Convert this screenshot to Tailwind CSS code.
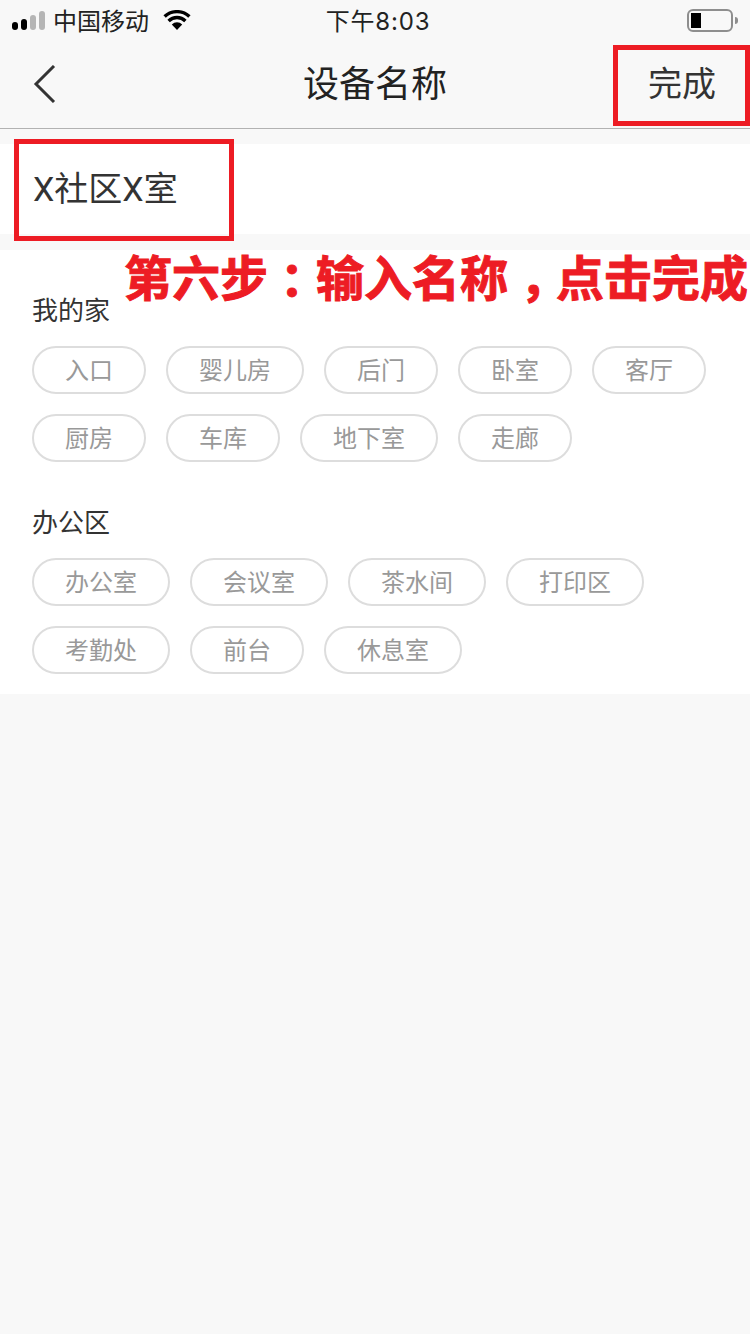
<!DOCTYPE html>
<html lang="zh-CN">
<head>
    <meta charset="UTF-8">
    <meta name="viewport" content="width=device-width, initial-scale=1.0">
    <title>设备名称</title>
    <script src="https://cdn.jsdelivr.net/npm/@tailwindcss/browser@4"></script>
</head>
<body class="bg-[#f8f8f8] font-['Noto_Sans_CJK_SC','Noto_Sans',sans-serif]">
    <div class="relative w-[750px] h-[1334px] overflow-hidden">
        <!-- Status bar -->
        <div class="grid grid-cols-[1fr_auto_1fr] items-center h-[40px] pl-[12px] pr-[12px] text-[24px] text-[#222]">
            <div class="flex items-center">
                <div class="flex items-end gap-[3px] h-[20px] w-[33px]">
                    <span class="w-[6px] h-[8px] rounded-[3px] bg-black"></span>
                    <span class="w-[6px] h-[11px] rounded-[3px] bg-black"></span>
                    <span class="w-[6px] h-[15px] rounded-[3px] bg-[#b5b5b5]"></span>
                    <span class="w-[6px] h-[19px] rounded-[3px] bg-[#b5b5b5]"></span>
                </div>
                <span class="ml-[8px] leading-none whitespace-nowrap">中国移动</span>
                <svg class="ml-[14px] shrink-0" width="28" height="20" viewBox="0 0 28 20">
                    <path d="M14 20 L8.8 14.4 A7.6 7.6 0 0 1 19.2 14.4 Z" fill="#000"/>
                    <path d="M5.6 11 A12 12 0 0 1 22.4 11" fill="none" stroke="#000" stroke-width="3.4"/>
                    <path d="M1.6 6.6 A18 18 0 0 1 26.4 6.6" fill="none" stroke="#000" stroke-width="3.4"/>
                </svg>
            </div>
            <div class="text-center leading-none whitespace-nowrap mt-[4px] pl-[6px] font-['Inter','Noto_Sans_CJK_SC',sans-serif] tracking-[0.8px]">下午8:03</div>
            <div class="flex justify-end items-center">
                <div class="w-[46px] h-[23px] rounded-[6px] border-2 border-[#8e8e8e] p-[2px]">
                    <div class="w-[10px] h-full bg-black"></div>
                </div>
                <span class="ml-[2px] w-[3px] h-[7px] bg-[#8e8e8e] rounded-r-full"></span>
            </div>
        </div>

        <!-- Nav -->
        <div class="grid grid-cols-[1fr_auto_1fr] items-center h-[89px] border-b border-[#b2b2b2] pb-[6px]">
            <svg class="ml-[32px] mt-[6px]" width="26" height="38" viewBox="0 0 26 38">
                <path d="M22 1 L4 19 L22 37" fill="none" stroke="#333" stroke-width="3"/>
            </svg>
            <div class="text-[36px] leading-none text-[#222]">设备名称</div>
            <div class="justify-self-end mr-[34px] mt-[2px] text-[34px] leading-none text-[#333]">完成</div>
        </div>

        <!-- Input -->
        <div class="mt-[15px] h-[90px] bg-white flex items-center pl-[33px] text-[34px] text-[#333] font-['Roboto','Noto_Sans_CJK_SC',sans-serif]">X社区X室</div>

        <!-- Suggested names -->
        <div class="mt-[16px] bg-white px-[32px] pb-[20px] text-[24px] text-[#999]">
            <div class="pt-[42px]">
                <div class="h-[36px] leading-[34px] text-[26px] text-[#333] mb-[18px]">我的家</div>
                <div class="flex flex-wrap gap-[20px]">
                    <span class="h-[48px] leading-[42px] px-[31px] border-2 border-[#ddd] rounded-full">入口</span>
                    <span class="h-[48px] leading-[42px] px-[31px] border-2 border-[#ddd] rounded-full">婴儿房</span>
                    <span class="h-[48px] leading-[42px] px-[31px] border-2 border-[#ddd] rounded-full">后门</span>
                    <span class="h-[48px] leading-[42px] px-[31px] border-2 border-[#ddd] rounded-full">卧室</span>
                    <span class="h-[48px] leading-[42px] px-[31px] border-2 border-[#ddd] rounded-full">客厅</span>
                    <span class="h-[48px] leading-[42px] px-[31px] border-2 border-[#ddd] rounded-full">厨房</span>
                    <span class="h-[48px] leading-[42px] px-[31px] border-2 border-[#ddd] rounded-full">车库</span>
                    <span class="h-[48px] leading-[42px] px-[31px] border-2 border-[#ddd] rounded-full">地下室</span>
                    <span class="h-[48px] leading-[42px] px-[31px] border-2 border-[#ddd] rounded-full">走廊</span>
                </div>
            </div>
            <div class="pt-[42px]">
                <div class="h-[36px] leading-[34px] text-[26px] text-[#333] mb-[18px]">办公区</div>
                <div class="flex flex-wrap gap-[20px] w-[640px]">
                    <span class="h-[48px] leading-[42px] px-[31px] border-2 border-[#ddd] rounded-full">办公室</span>
                    <span class="h-[48px] leading-[42px] px-[31px] border-2 border-[#ddd] rounded-full">会议室</span>
                    <span class="h-[48px] leading-[42px] px-[31px] border-2 border-[#ddd] rounded-full">茶水间</span>
                    <span class="h-[48px] leading-[42px] px-[31px] border-2 border-[#ddd] rounded-full">打印区</span>
                    <span class="h-[48px] leading-[42px] px-[31px] border-2 border-[#ddd] rounded-full">考勤处</span>
                    <span class="h-[48px] leading-[42px] px-[31px] border-2 border-[#ddd] rounded-full">前台</span>
                    <span class="h-[48px] leading-[42px] px-[31px] border-2 border-[#ddd] rounded-full">休息室</span>
                </div>
            </div>
        </div>

        <!-- Annotation overlays -->
        <div class="absolute left-[613px] top-[45px] w-[137px] h-[81px] border-[5px] border-[#ed1c24]"></div>
        <div class="absolute left-[14px] top-[139px] w-[220px] h-[102px] border-[5px] border-[#ed1c24]"></div>
        <div class="absolute left-[124px] top-[247px] text-[48px] leading-[56px] font-bold text-[#ed1c24] whitespace-nowrap [-webkit-text-stroke:1px_#ed1c24]">第六步<span class="inline-block w-[48px] text-center [font-feature-settings:'halt']">&#xFF1A;</span>输入名称<span class="inline-block w-[48px] text-center [font-feature-settings:'halt']">&#xFF0C;</span>点击完成</div>
    </div>
</body>
</html>
